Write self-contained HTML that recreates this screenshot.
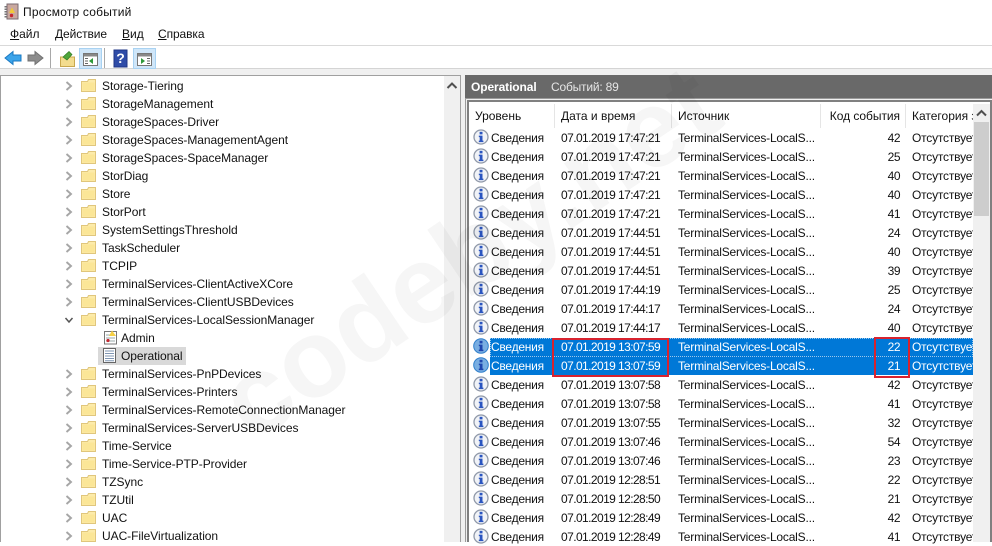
<!DOCTYPE html>
<html><head><meta charset="utf-8"><style>
html,body{margin:0;padding:0}
body{width:992px;height:542px;overflow:hidden;position:relative;background:#fff;font:12px/16px "Liberation Sans","Noto Sans CJK SC",sans-serif;color:#111}
.a{position:absolute}
.t{position:absolute;white-space:nowrap}
#tree div{position:absolute;left:102px;white-space:nowrap;height:16px;letter-spacing:-.05px}
#tree svg{position:absolute;overflow:visible}
.ch{left:-37px;top:3px;width:8px;height:10px}
.fo{left:-21px;top:0;width:15px;height:14px}
#ev .r{position:absolute;left:470px;width:503px;height:19px;overflow:hidden}
#ev span{position:absolute;top:2px;white-space:nowrap}
#ev svg{position:absolute;left:3px;top:1px;width:16px;height:16px}
.l{left:21px;letter-spacing:-.25px}.d{left:91px;letter-spacing:-.58px}.s{left:208px;letter-spacing:-.2px}.c{right:73px;letter-spacing:-.5px}.k{left:442px;letter-spacing:-.2px}
.sel .l,.sel .d,.sel .s,.sel .c,.sel .k{color:#fff}
.bl{position:absolute;left:490px;width:483px;height:19px;background:#0078d7}
u{text-decoration:underline}
</style></head><body>
<svg width="0" height="0" style="position:absolute"><defs>
<g id="chv"><path d="M1.500 1L6 5L1.500 9" fill="none" stroke="#a6a6a6" stroke-width="1.900"/></g>
<g id="fol"><path d="M.5 3.500V13.500H14.500V1.500H7.500L6.500 3.500Z" fill="#fcebaa" stroke="#e0c67c"/><path d="M1.500 4.500H13.500V12.500H1.500Z" fill="#fbe697"/></g>
<g id="inf"><circle cx="8" cy="8" r="7" fill="#f1f3f7" stroke="#8f98a8" stroke-width="1.300"/><rect x="6.600" y="2.800" width="2.900" height="2.600" fill="#2a55c0"/><path d="M5.800 6.600H9.500V11.600H10.400V13.100H5.800V11.600H6.700V8.100H5.800Z" fill="#2a55c0"/></g>
<g id="ins"><circle cx="8" cy="8" r="7.300" fill="#79aee2" stroke="#2f7fcb"/><rect x="6.600" y="2.800" width="2.900" height="2.600" fill="#1d45ae"/><path d="M5.800 6.600H9.500V11.600H10.400V13.100H5.800V11.600H6.700V8.100H5.800Z" fill="#1d45ae"/></g>
</defs></svg>

<!-- title -->
<svg class="a" style="left:4px;top:3px" width="16" height="17" viewBox="0 0 16 17"><rect x="3" y="1" width="11" height="15" fill="#c9a8a0" stroke="#7a6a70"/><path d="M1.500 3V15" stroke="#777" stroke-width="2" stroke-dasharray="1.500 1"/><path d="M8 4.500L11 10H5Z" fill="#f2c83a"/><circle cx="7.500" cy="12.500" r="1.700" fill="#c4262e"/></svg>
<div class="t" style="left:23px;top:4px;color:#111;letter-spacing:.2px">Просмотр событий</div>
<!-- menu -->
<div class="t" style="left:10px;top:26px"><u>Ф</u>айл</div>
<div class="t" style="left:55px;top:26px;letter-spacing:-.1px"><u>Д</u>ействие</div>
<div class="t" style="left:122px;top:26px"><u>В</u>ид</div>
<div class="t" style="left:158px;top:26px;letter-spacing:-.1px"><u>С</u>правка</div>
<!-- toolbar -->
<div class="a" style="left:0;top:45px;width:992px;height:1px;background:#d9d9d9"></div>
<div class="a" style="left:0;top:46px;width:992px;height:23px;background:#fff"></div>
<div class="a" style="left:0;top:68px;width:992px;height:7px;background:#f0f0f0;border-top:1px solid #d4d4d4;box-sizing:border-box"></div>
<svg class="a" style="left:0;top:46px" width="170" height="24" viewBox="0 0 170 24">
<path d="M5 12L13 5.500V9H21V15H13V18.500Z" fill="#3ba4ea" stroke="#1a78c2"/>
<path d="M43 12L35 5.500V9H28V15H35V18.500Z" fill="#8c8c8c" stroke="#707070"/>
<rect x="50" y="2" width="1" height="20" fill="#a8a8a8"/>
<path d="M60.500 11H74.500V20.500H60.500Z" fill="#f3dc8e" stroke="#c9a84e"/><path d="M63 11L69 5.500L72 8.500L67 14Z" fill="#4fa53a" stroke="#2f7a23" stroke-width=".7"/>
<rect x="79.500" y="2.500" width="22" height="20" fill="#cfe6f9" stroke="#a8d2f2"/>
<rect x="83.500" y="7.500" width="14" height="12" fill="#fff" stroke="#777"/><rect x="84" y="8" width="13" height="2.500" fill="#888"/><path d="M93 12V18L89 15Z" fill="#2f9a3a"/><path d="M85 12.500H88M85 15H88M85 17.500H88" stroke="#666"/>
<rect x="104" y="2" width="1" height="20" fill="#a8a8a8"/>
<rect x="114" y="4" width="13" height="17" fill="#2f4ca8" stroke="#1f3586"/><text x="120.500" y="17" font-family="Liberation Sans" font-weight="700" font-size="14" fill="#fff" text-anchor="middle">?</text>
<rect x="133.500" y="2.500" width="22" height="20" fill="#cfe6f9" stroke="#a8d2f2"/>
<rect x="137.500" y="7.500" width="14" height="12" fill="#fff" stroke="#777"/><rect x="138" y="8" width="13" height="2.500" fill="#888"/><path d="M141 12V18L145 15Z" fill="#2f9a3a"/><path d="M147 12.500H150M147 15H150M147 17.500H150" stroke="#666"/>
</svg>

<!-- left pane frame -->
<div class="a" style="left:0;top:75px;width:461px;height:467px;border:1px solid #a0a0a0;border-bottom:0;box-sizing:border-box;background:#fff"></div>
<div class="a" style="left:444px;top:76px;width:16px;height:466px;background:#f0f0f0"></div>
<svg class="a" style="left:444px;top:80px" width="16" height="12"><path d="M3.500 8L8 3.500L12.500 8" fill="none" stroke="#505050" stroke-width="2"/></svg>
<div class="a" style="left:461px;top:75px;width:4px;height:467px;background:#f0f0f0"></div>

<!-- tree -->
<div id="tree">
<div style="top:78px">Storage-Tiering<svg class="ch"><use href="#chv"/></svg><svg class="fo"><use href="#fol"/></svg></div>
<div style="top:96px">StorageManagement<svg class="ch"><use href="#chv"/></svg><svg class="fo"><use href="#fol"/></svg></div>
<div style="top:114px">StorageSpaces-Driver<svg class="ch"><use href="#chv"/></svg><svg class="fo"><use href="#fol"/></svg></div>
<div style="top:132px">StorageSpaces-ManagementAgent<svg class="ch"><use href="#chv"/></svg><svg class="fo"><use href="#fol"/></svg></div>
<div style="top:150px">StorageSpaces-SpaceManager<svg class="ch"><use href="#chv"/></svg><svg class="fo"><use href="#fol"/></svg></div>
<div style="top:168px">StorDiag<svg class="ch"><use href="#chv"/></svg><svg class="fo"><use href="#fol"/></svg></div>
<div style="top:186px">Store<svg class="ch"><use href="#chv"/></svg><svg class="fo"><use href="#fol"/></svg></div>
<div style="top:204px">StorPort<svg class="ch"><use href="#chv"/></svg><svg class="fo"><use href="#fol"/></svg></div>
<div style="top:222px">SystemSettingsThreshold<svg class="ch"><use href="#chv"/></svg><svg class="fo"><use href="#fol"/></svg></div>
<div style="top:240px">TaskScheduler<svg class="ch"><use href="#chv"/></svg><svg class="fo"><use href="#fol"/></svg></div>
<div style="top:258px">TCPIP<svg class="ch"><use href="#chv"/></svg><svg class="fo"><use href="#fol"/></svg></div>
<div style="top:276px">TerminalServices-ClientActiveXCore<svg class="ch"><use href="#chv"/></svg><svg class="fo"><use href="#fol"/></svg></div>
<div style="top:294px">TerminalServices-ClientUSBDevices<svg class="ch"><use href="#chv"/></svg><svg class="fo"><use href="#fol"/></svg></div>
<div style="top:312px">TerminalServices-LocalSessionManager<svg class="ch"><path d="M.5 3L4 7L7.500 3" fill="none" stroke="#555" stroke-width="1.500"/></svg><svg class="fo"><use href="#fol"/></svg></div>
<div style="top:330px;left:121px">Admin<svg style="left:-18px;top:0;width:15px;height:15px"><rect x="1.500" y="1.500" width="12" height="12.500" fill="#fff" stroke="#777"/><path d="M3 5H12M3 8H12M3 11H12" stroke="#9aa"/><path d="M9 .5L13 6H6Z" fill="#f5cf45"/><circle cx="5" cy="10.500" r="1.600" fill="#c4262e"/></svg></div>
<div class="a" style="left:98px;top:347px;width:88px;height:18px;background:#d9d9d9"></div>
<div style="top:348px;left:121px">Operational<svg style="left:-19px;top:0;width:15px;height:15px"><rect x="1.500" y=".5" width="12" height="14" fill="#fff" stroke="#666"/><path d="M3 3H12M3 5.500H12M3 8H12M3 10.500H12M3 12.700H12" stroke="#7f95b2"/></svg></div>
<div style="top:366px">TerminalServices-PnPDevices<svg class="ch"><use href="#chv"/></svg><svg class="fo"><use href="#fol"/></svg></div>
<div style="top:384px">TerminalServices-Printers<svg class="ch"><use href="#chv"/></svg><svg class="fo"><use href="#fol"/></svg></div>
<div style="top:402px">TerminalServices-RemoteConnectionManager<svg class="ch"><use href="#chv"/></svg><svg class="fo"><use href="#fol"/></svg></div>
<div style="top:420px">TerminalServices-ServerUSBDevices<svg class="ch"><use href="#chv"/></svg><svg class="fo"><use href="#fol"/></svg></div>
<div style="top:438px">Time-Service<svg class="ch"><use href="#chv"/></svg><svg class="fo"><use href="#fol"/></svg></div>
<div style="top:456px">Time-Service-PTP-Provider<svg class="ch"><use href="#chv"/></svg><svg class="fo"><use href="#fol"/></svg></div>
<div style="top:474px">TZSync<svg class="ch"><use href="#chv"/></svg><svg class="fo"><use href="#fol"/></svg></div>
<div style="top:492px">TZUtil<svg class="ch"><use href="#chv"/></svg><svg class="fo"><use href="#fol"/></svg></div>
<div style="top:510px">UAC<svg class="ch"><use href="#chv"/></svg><svg class="fo"><use href="#fol"/></svg></div>
<div style="top:528px">UAC-FileVirtualization<svg class="ch"><use href="#chv"/></svg><svg class="fo"><use href="#fol"/></svg></div>
</div>

<!-- right pane -->
<div class="a" style="left:465px;top:75px;width:527px;height:23px;background:#696969"></div>
<div class="t" style="left:471px;top:79px;color:#fff;font-weight:700;letter-spacing:-.1px">Operational</div>
<div class="t" style="left:551px;top:79px;color:#e6e6e6;letter-spacing:-.2px">Событий: 89</div>
<div class="a" style="left:465px;top:98px;width:527px;height:444px;background:#9a9a9a"></div>
<div class="a" style="left:466px;top:99px;width:526px;height:443px;background:#f0f0f0"></div>
<div class="a" style="left:467px;top:100px;width:525px;height:442px;background:#808080"></div>
<div class="a" style="left:469px;top:102px;width:521px;height:440px;background:#fff"></div>
<!-- header separators -->
<div class="a" style="left:554px;top:104px;width:1px;height:24px;background:#e5e5e5"></div>
<div class="a" style="left:671px;top:104px;width:1px;height:24px;background:#e5e5e5"></div>
<div class="a" style="left:820px;top:104px;width:1px;height:24px;background:#e5e5e5"></div>
<div class="a" style="left:905px;top:104px;width:1px;height:24px;background:#e5e5e5"></div>
<div class="t" style="left:475px;top:108px">Уровень</div>
<div class="t" style="left:561px;top:108px">Дата и время</div>
<div class="t" style="left:678px;top:108px">Источник</div>
<div class="t" style="right:92px;top:108px;letter-spacing:-.05px">Код события</div>
<div class="t" style="left:912px;top:108px;width:61px;overflow:hidden">Категория задачи</div>

<div class="bl" style="top:338px"></div>
<div class="bl" style="top:357px;height:18px"></div>
<div class="a" style="left:490px;top:338px;width:483px;height:19px;box-sizing:border-box;border:1px dotted #9cc8ec"></div>

<div id="ev">
<div class="r" style="top:128px"><svg><use href="#inf"/></svg><span class="l">Сведения</span><span class="d">07.01.2019 17:47:21</span><span class="s">TerminalServices-LocalS...</span><span class="c">42</span><span class="k">Отсутствует</span></div>
<div class="r" style="top:147px"><svg><use href="#inf"/></svg><span class="l">Сведения</span><span class="d">07.01.2019 17:47:21</span><span class="s">TerminalServices-LocalS...</span><span class="c">25</span><span class="k">Отсутствует</span></div>
<div class="r" style="top:166px"><svg><use href="#inf"/></svg><span class="l">Сведения</span><span class="d">07.01.2019 17:47:21</span><span class="s">TerminalServices-LocalS...</span><span class="c">40</span><span class="k">Отсутствует</span></div>
<div class="r" style="top:185px"><svg><use href="#inf"/></svg><span class="l">Сведения</span><span class="d">07.01.2019 17:47:21</span><span class="s">TerminalServices-LocalS...</span><span class="c">40</span><span class="k">Отсутствует</span></div>
<div class="r" style="top:204px"><svg><use href="#inf"/></svg><span class="l">Сведения</span><span class="d">07.01.2019 17:47:21</span><span class="s">TerminalServices-LocalS...</span><span class="c">41</span><span class="k">Отсутствует</span></div>
<div class="r" style="top:223px"><svg><use href="#inf"/></svg><span class="l">Сведения</span><span class="d">07.01.2019 17:44:51</span><span class="s">TerminalServices-LocalS...</span><span class="c">24</span><span class="k">Отсутствует</span></div>
<div class="r" style="top:242px"><svg><use href="#inf"/></svg><span class="l">Сведения</span><span class="d">07.01.2019 17:44:51</span><span class="s">TerminalServices-LocalS...</span><span class="c">40</span><span class="k">Отсутствует</span></div>
<div class="r" style="top:261px"><svg><use href="#inf"/></svg><span class="l">Сведения</span><span class="d">07.01.2019 17:44:51</span><span class="s">TerminalServices-LocalS...</span><span class="c">39</span><span class="k">Отсутствует</span></div>
<div class="r" style="top:280px"><svg><use href="#inf"/></svg><span class="l">Сведения</span><span class="d">07.01.2019 17:44:19</span><span class="s">TerminalServices-LocalS...</span><span class="c">25</span><span class="k">Отсутствует</span></div>
<div class="r" style="top:299px"><svg><use href="#inf"/></svg><span class="l">Сведения</span><span class="d">07.01.2019 17:44:17</span><span class="s">TerminalServices-LocalS...</span><span class="c">24</span><span class="k">Отсутствует</span></div>
<div class="r" style="top:318px"><svg><use href="#inf"/></svg><span class="l">Сведения</span><span class="d">07.01.2019 17:44:17</span><span class="s">TerminalServices-LocalS...</span><span class="c">40</span><span class="k">Отсутствует</span></div>
<div class="r sel" style="top:337px"><svg><use href="#ins"/></svg><span class="l">Сведения</span><span class="d">07.01.2019 13:07:59</span><span class="s">TerminalServices-LocalS...</span><span class="c">22</span><span class="k">Отсутствует</span></div>
<div class="r sel" style="top:356px"><svg><use href="#ins"/></svg><span class="l">Сведения</span><span class="d">07.01.2019 13:07:59</span><span class="s">TerminalServices-LocalS...</span><span class="c">21</span><span class="k">Отсутствует</span></div>
<div class="r" style="top:375px"><svg><use href="#inf"/></svg><span class="l">Сведения</span><span class="d">07.01.2019 13:07:58</span><span class="s">TerminalServices-LocalS...</span><span class="c">42</span><span class="k">Отсутствует</span></div>
<div class="r" style="top:394px"><svg><use href="#inf"/></svg><span class="l">Сведения</span><span class="d">07.01.2019 13:07:58</span><span class="s">TerminalServices-LocalS...</span><span class="c">41</span><span class="k">Отсутствует</span></div>
<div class="r" style="top:413px"><svg><use href="#inf"/></svg><span class="l">Сведения</span><span class="d">07.01.2019 13:07:55</span><span class="s">TerminalServices-LocalS...</span><span class="c">32</span><span class="k">Отсутствует</span></div>
<div class="r" style="top:432px"><svg><use href="#inf"/></svg><span class="l">Сведения</span><span class="d">07.01.2019 13:07:46</span><span class="s">TerminalServices-LocalS...</span><span class="c">54</span><span class="k">Отсутствует</span></div>
<div class="r" style="top:451px"><svg><use href="#inf"/></svg><span class="l">Сведения</span><span class="d">07.01.2019 13:07:46</span><span class="s">TerminalServices-LocalS...</span><span class="c">23</span><span class="k">Отсутствует</span></div>
<div class="r" style="top:470px"><svg><use href="#inf"/></svg><span class="l">Сведения</span><span class="d">07.01.2019 12:28:51</span><span class="s">TerminalServices-LocalS...</span><span class="c">22</span><span class="k">Отсутствует</span></div>
<div class="r" style="top:489px"><svg><use href="#inf"/></svg><span class="l">Сведения</span><span class="d">07.01.2019 12:28:50</span><span class="s">TerminalServices-LocalS...</span><span class="c">21</span><span class="k">Отсутствует</span></div>
<div class="r" style="top:508px"><svg><use href="#inf"/></svg><span class="l">Сведения</span><span class="d">07.01.2019 12:28:49</span><span class="s">TerminalServices-LocalS...</span><span class="c">42</span><span class="k">Отсутствует</span></div>
<div class="r" style="top:527px"><svg><use href="#inf"/></svg><span class="l">Сведения</span><span class="d">07.01.2019 12:28:49</span><span class="s">TerminalServices-LocalS...</span><span class="c">41</span><span class="k">Отсутствует</span></div>
</div>

<!-- right scrollbar -->
<div class="a" style="left:973px;top:104px;width:17px;height:438px;background:#f0f0f0"></div>
<svg class="a" style="left:973px;top:106px" width="17" height="14"><path d="M4 9.500L8.500 5L13 9.500" fill="none" stroke="#505050" stroke-width="2"/></svg>
<div class="a" style="left:974px;top:122px;width:15px;height:94px;background:#cdcdcd"></div>

<!-- red boxes -->
<div class="a" style="left:552px;top:338px;width:117px;height:39px;box-sizing:border-box;border:2px solid #d8232f"></div>
<div class="a" style="left:874px;top:337px;width:36px;height:41px;box-sizing:border-box;border:2px solid #d8232f"></div>

<!-- watermark -->
<div class="t" style="left:232px;top:358px;font:700 110px/110px 'Liberation Sans',sans-serif;color:#f6f6f6;mix-blend-mode:multiply;transform:rotate(-34deg);transform-origin:0 50%">codeby.net</div>
</body></html>
